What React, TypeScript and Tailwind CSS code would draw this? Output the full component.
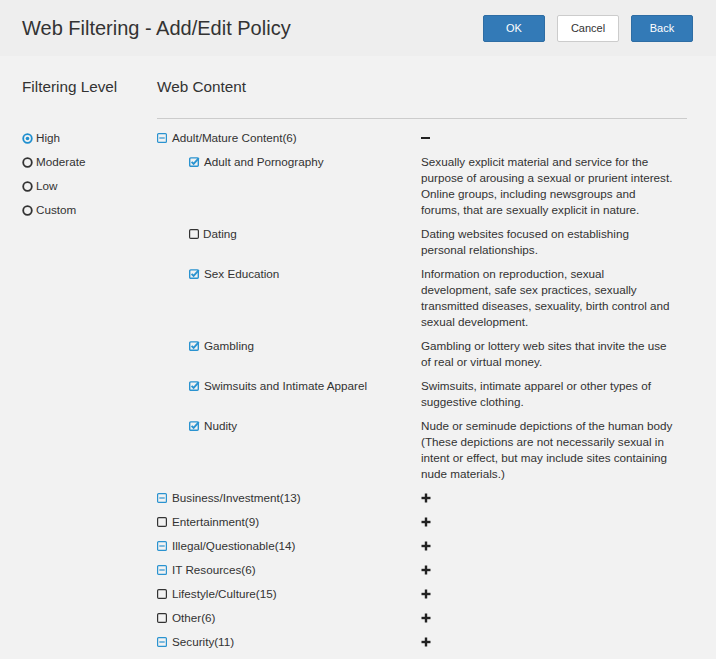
import React from "react";

const font = { fontFamily: '"Liberation Sans", Arial, sans-serif' };

function Radio({ on }: { on?: boolean }) {
  return (
    <svg width="11" height="11" viewBox="0 0 11 11" className="shrink-0">
      <circle cx="5.5" cy="5.5" r="4.3" fill="none" stroke={on ? "#1f8fcf" : "#333"} strokeWidth="1.8" />
      {on && <circle cx="5.5" cy="5.5" r="1.8" fill="#1f8fcf" />}
    </svg>
  );
}

function MinusSq() {
  return (
    <svg width="10" height="10" viewBox="0 0 10 10" className="shrink-0">
      <rect x="0.6" y="0.6" width="8.8" height="8.8" rx="1" fill="none" stroke="#2a93d0" strokeWidth="1.2" />
      <line x1="2.3" y1="5" x2="7.7" y2="5" stroke="#2a93d0" strokeWidth="1.2" />
    </svg>
  );
}

function Box({ on }: { on?: boolean }) {
  if (on)
    return (
      <svg width="11" height="10" viewBox="0 0 11 10" className="shrink-0">
        <rect x="0.7" y="0.9" width="8.6" height="8.4" rx="1" fill="none" stroke="#2a93d0" strokeWidth="1.4" />
        <path d="M2.6 4.8 L4.6 6.8 L9.8 1.2" fill="none" stroke="#2a93d0" strokeWidth="1.9" />
      </svg>
    );
  return (
    <svg width="10" height="10" viewBox="0 0 10 10" className="shrink-0">
      <rect x="0.6" y="0.6" width="8.8" height="8.8" rx="1.2" fill="none" stroke="#333" strokeWidth="1.2" />
    </svg>
  );
}

function Plus() {
  return (
    <svg width="10" height="10" viewBox="0 0 10 10">
      <rect x="3.8" y="0.5" width="2.4" height="9" fill="#222" />
      <rect x="0.5" y="3.8" width="9" height="2.4" fill="#222" />
    </svg>
  );
}

const subs: { name: string; on: boolean; desc: string[] }[] = [
  {
    name: "Adult and Pornography",
    on: true,
    desc: [
      "Sexually explicit material and service for the",
      "purpose of arousing a sexual or prurient interest.",
      "Online groups, including newsgroups and",
      "forums, that are sexually explicit in nature.",
    ],
  },
  { name: "Dating", on: false, desc: ["Dating websites focused on establishing", "personal relationships."] },
  {
    name: "Sex Education",
    on: true,
    desc: [
      "Information on reproduction, sexual",
      "development, safe sex practices, sexually",
      "transmitted diseases, sexuality, birth control and",
      "sexual development.",
    ],
  },
  { name: "Gambling", on: true, desc: ["Gambling or lottery web sites that invite the use", "of real or virtual money."] },
  { name: "Swimsuits and Intimate Apparel", on: true, desc: ["Swimsuits, intimate apparel or other types of", "suggestive clothing."] },
  {
    name: "Nudity",
    on: true,
    desc: [
      "Nude or seminude depictions of the human body",
      "(These depictions are not necessarily sexual in",
      "intent or effect, but may include sites containing",
      "nude materials.)",
    ],
  },
];

const cats: { name: string; minus: boolean }[] = [
  { name: "Business/Investment(13)", minus: true },
  { name: "Entertainment(9)", minus: false },
  { name: "Illegal/Questionable(14)", minus: true },
  { name: "IT Resources(6)", minus: true },
  { name: "Lifestyle/Culture(15)", minus: false },
  { name: "Other(6)", minus: false },
  { name: "Security(11)", minus: true },
];

export default function App() {
  return (
    <div className="w-[716px] h-[659px] overflow-hidden bg-[#f2f2f2] text-[#333]" style={font}>
      <div className="h-[56px] bg-[#eeeeee] flex items-center pl-[22px] pr-[23px]">
        <div className="text-[20px] leading-none text-[#333] flex-1">Web Filtering - Add/Edit Policy</div>
        <button className="w-[62px] h-[27px] rounded-[2px] bg-[#337ab7] border border-[#2e6da4] text-white text-[11px]">OK</button>
        <button className="ml-[12px] w-[62px] h-[27px] rounded-[2px] bg-white border border-[#ccc] text-[#333] text-[11px]">Cancel</button>
        <button className="ml-[12px] w-[62px] h-[27px] rounded-[2px] bg-[#337ab7] border border-[#2e6da4] text-white text-[11px]">Back</button>
      </div>
      <div className="flex pl-[22px]">
        <div className="w-[135px] shrink-0">
          <div className="h-[63px] pt-[22px] text-[15.3px] leading-[18px] text-[#333]">Filtering Level</div>
          <div className="flex flex-col text-[11.7px] leading-[16px] pt-[11px]">
            {[["High", true], ["Moderate", false], ["Low", false], ["Custom", false]].map(([l, on]) => (
              <div key={l as string} className="flex items-center gap-[3px] h-[16px] mb-[8px]">
                <Radio on={on as boolean} />
                <span>{l as string}</span>
              </div>
            ))}
          </div>
        </div>
        <div className="w-[530px]">
          <div className="h-[63px] pt-[22px] text-[15.3px] leading-[18px] text-[#333] border-b border-[#cccccc]">Web Content</div>
          <div className="pt-[11px] text-[11.7px] leading-[16px]">
            <div className="flex h-[16px] mb-[8px] items-center">
              <div className="w-[264px] flex items-center gap-[5px]">
                <MinusSq />
                <span>Adult/Mature Content(6)</span>
              </div>
              <div className="w-[9px] h-[2.5px] bg-[#222]" />
            </div>
            {subs.map((s) => (
              <div key={s.name} className="flex mb-[8px]">
                <div className="w-[264px] pl-[32px] flex items-start gap-[4px]">
                  <div className="h-[16px] flex items-center">
                    <Box on={s.on} />
                  </div>
                  <span>{s.name}</span>
                </div>
                <div className="w-[262px] whitespace-nowrap">
                  {s.desc.map((line) => (
                    <div key={line}>{line}</div>
                  ))}
                </div>
              </div>
            ))}
            {cats.map((c) => (
              <div key={c.name} className="flex h-[16px] mb-[8px] items-center">
                <div className="w-[264px] flex items-center gap-[5px]">
                  {c.minus ? <MinusSq /> : <Box />}
                  <span>{c.name}</span>
                </div>
                <Plus />
              </div>
            ))}
          </div>
        </div>
      </div>
    </div>
  );
}
